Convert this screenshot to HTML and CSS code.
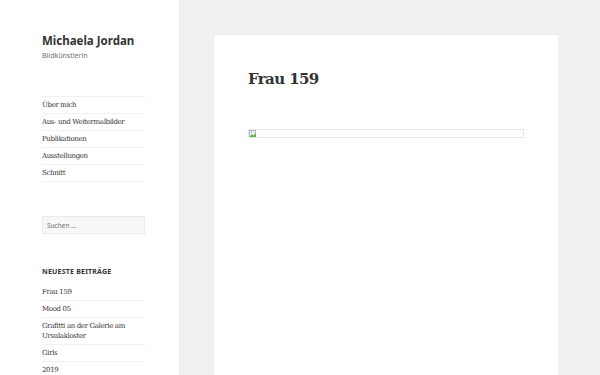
FILE: index.html
```html
<!DOCTYPE html>
<html lang="de">
<head>
  <meta charset="UTF-8">
  <meta name="viewport" content="width=device-width, initial-scale=1.0">
  <title>Frau 159 – Michaela Jordan</title>
  <link rel="stylesheet" href="styles.css">
</head>
<body>
  <div class="page">
    <aside class="sidebar">
      <div class="sidebar-inner">
        <header class="site-header">
          <p class="site-title">Michaela Jordan</p>
          <p class="site-description">Bildkünstlerin</p>
        </header>
        <nav class="main-nav">
          <ul>
            <li><a href="#">Über mich</a></li>
            <li><a href="#">Aus- und Weitermalbilder</a></li>
            <li><a href="#">Publikationen</a></li>
            <li><a href="#">Ausstellungen</a></li>
            <li><a href="#">Schnitt</a></li>
          </ul>
        </nav>
        <form class="search-form">
          <input type="search" placeholder="Suchen …">
        </form>
        <section class="widget">
          <h2 class="widget-title">Neueste Beiträge</h2>
          <ul>
            <li><a href="#">Frau 159</a></li>
            <li><a href="#">Mood 05</a></li>
            <li><a href="#">Grafitti an der Galerie am Ursulakloster</a></li>
            <li><a href="#">Girls</a></li>
            <li><a href="#">2019</a></li>
          </ul>
        </section>
      </div>
    </aside>
    <main class="content">
      <article class="post">
        <h1 class="entry-title">Frau 159</h1>
        <div class="entry-content">
          <div class="broken-img">
            <svg width="8" height="8" viewBox="0 0 8 8">
              <rect x="0.5" y="0.5" width="6" height="6" fill="#eef3f8" stroke="#9aa7b4" stroke-width="0.8"/>
              <path d="M1 6.5 L3 4 L4.5 5.5 L7 3 L7 7 L1 7 Z" fill="#5fae3f"/>
              <circle cx="2.5" cy="2.3" r="0.8" fill="#8fb4d9"/>
            </svg>
          </div>
        </div>
      </article>
    </main>
  </div>
</body>
</html>
```

FILE: styles.css
```css
* { box-sizing: border-box; }
body {
  margin: 0;
  background: #f1f1f1;
  color: #333;
  font-family: "DejaVu Serif", serif;
}
.page {
  display: flex;
  min-height: 375px;
}
.sidebar {
  width: 179px;
  flex-shrink: 0;
  background: #fff;
  box-shadow: 0 0 1px rgba(0, 0, 0, 0.15);
}
.sidebar-inner {
  margin-left: 42px;
  width: 103px;
  padding-top: 33px;
}
.site-title {
  margin: 0;
  font-family: "Noto Sans", sans-serif;
  font-weight: 700;
  font-size: 11.5px;
  line-height: 16px;
  color: #333;
}
.site-description {
  margin: 2px 0 0;
  font-family: "Noto Sans", sans-serif;
  font-size: 7px;
  line-height: 10px;
  color: #707070;
}
ul {
  list-style: none;
  margin: 0;
  padding: 0;
}
a {
  color: #333;
  text-decoration: none;
}
.main-nav {
  margin-top: 35px;
}
.main-nav ul {
  border-top: 1px solid #f1f1f1;
}
.main-nav li,
.widget li {
  border-bottom: 1px solid #f1f1f1;
  font-size: 7px;
  line-height: 10px;
  letter-spacing: -0.35px;
  padding: 3px 0 3px;
}
.search-form {
  margin-top: 34px;
}
.search-form input {
  display: block;
  width: 103px;
  height: 18px;
  margin: 0;
  padding: 0 4px;
  border: 1px solid #eaeaea;
  background: #f7f7f7;
  font-family: "Noto Sans", sans-serif;
  font-size: 6.5px;
  color: #333;
  outline: none;
}
.search-form input::placeholder {
  color: #707070;
}
.widget {
  margin-top: 33px;
}
.widget-title {
  margin: 0 0 7px;
  font-family: "Noto Sans", sans-serif;
  font-size: 7px;
  line-height: 10px;
  font-weight: 700;
  letter-spacing: 0.03em;
  text-transform: uppercase;
  color: #333;
}
.widget li:last-child {
  border-bottom: none;
}
.content {
  flex: 1;
  padding: 35px 42px 0 35px;
}
.post {
  background: #fff;
  min-height: 340px;
  padding: 33px 34px 0;
  box-shadow: 0 0 1px rgba(0, 0, 0, 0.15);
}
.entry-title {
  margin: 0;
  font-family: "DejaVu Serif", serif;
  font-size: 15px;
  line-height: 22px;
  font-weight: 700;
  letter-spacing: -0.6px;
  color: #333;
}
.entry-content {
  margin-top: 39px;
}
.broken-img {
  height: 9px;
  border: 1px solid #e6e6e6;
  display: flex;
  align-items: flex-start;
}
.broken-img svg {
  display: block;
}
```
